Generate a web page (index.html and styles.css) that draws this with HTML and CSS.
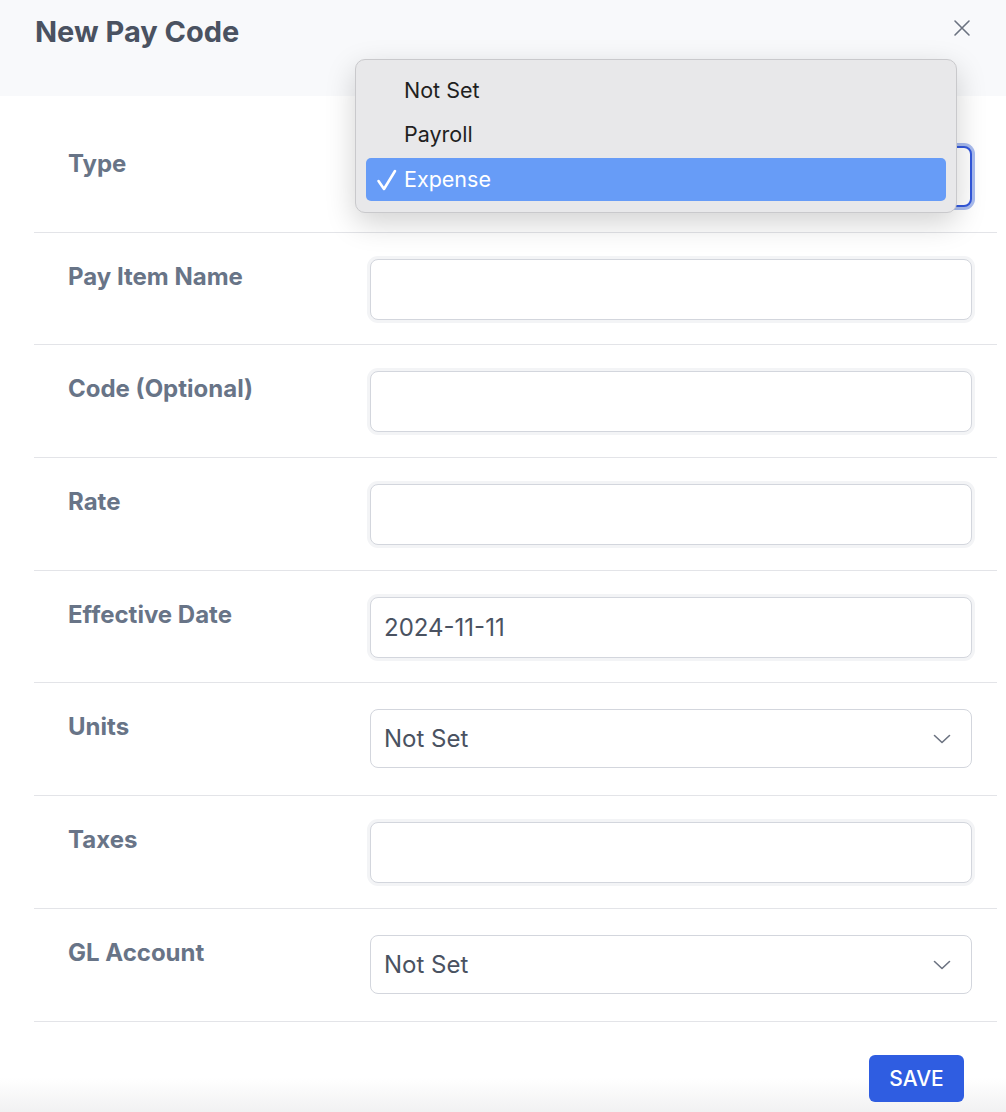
FILE: index.html
```html
<!DOCTYPE html>
<html lang="en">
<head>
    <meta charset="UTF-8">
    <meta name="viewport" content="width=device-width, initial-scale=1.0">
    <title>New Pay Code</title>
    <link rel="stylesheet" href="styles.css">
</head>
<body>
    <div class="modal">
        <header class="modal-header">
            <h2>New Pay Code</h2>
            <button class="close-btn" type="button" aria-label="Close">
                <svg width="18" height="18" viewBox="0 0 18 18"><path d="M2 2 L16 16 M16 2 L2 16" stroke="#6b7280" stroke-width="1.6" fill="none" stroke-linecap="round"/></svg>
            </button>
        </header>

        <form class="modal-body">
            <div class="field-row">
                <label for="type">Type</label>
                <div class="select-wrap">
                    <select id="type" class="select is-focused">
                        <option>Not Set</option>
                        <option>Payroll</option>
                        <option selected>Expense</option>
                    </select>
                </div>
            </div>
            <div class="field-row">
                <label for="payItem">Pay Item Name</label>
                <input id="payItem" class="input" type="text">
            </div>
            <div class="field-row">
                <label for="code">Code (Optional)</label>
                <input id="code" class="input" type="text">
            </div>
            <div class="field-row">
                <label for="rate">Rate</label>
                <input id="rate" class="input" type="text">
            </div>
            <div class="field-row">
                <label for="effDate">Effective Date</label>
                <input id="effDate" class="input" type="text" value="2024-11-11">
            </div>
            <div class="field-row">
                <label for="units">Units</label>
                <div class="select-wrap">
                    <select id="units" class="select">
                        <option>Not Set</option>
                    </select>
                    <svg class="chevron" width="18" height="10" viewBox="0 0 18 10"><path d="M1.5 1.5 L9 8.5 L16.5 1.5" stroke="#6b7280" stroke-width="1.6" fill="none" stroke-linecap="round" stroke-linejoin="round"/></svg>
                </div>
            </div>
            <div class="field-row">
                <label for="taxes">Taxes</label>
                <input id="taxes" class="input" type="text">
            </div>
            <div class="field-row">
                <label for="glAccount">GL Account</label>
                <div class="select-wrap">
                    <select id="glAccount" class="select">
                        <option>Not Set</option>
                    </select>
                    <svg class="chevron" width="18" height="10" viewBox="0 0 18 10"><path d="M1.5 1.5 L9 8.5 L16.5 1.5" stroke="#6b7280" stroke-width="1.6" fill="none" stroke-linecap="round" stroke-linejoin="round"/></svg>
                </div>
            </div>
        </form>

        <footer class="modal-footer">
            <button class="save-btn" type="button">SAVE</button>
        </footer>

        <!-- open native menu of the Type select -->
        <ul class="popup-menu">
            <li class="popup-item">Not Set</li>
            <li class="popup-item">Payroll</li>
            <li class="popup-item is-active">
                <svg class="check" width="22" height="24" viewBox="0 0 22 24"><path d="M2.5 13 L8 21 L19 3" stroke="#fff" stroke-width="2.6" fill="none" stroke-linecap="round" stroke-linejoin="round"/></svg>
                Expense
            </li>
        </ul>
    </div>
</body>
</html>
```

FILE: styles.css
```css
body {
    margin: 0;
    font-family: Inter, Roboto, "Liberation Sans", Arial, sans-serif;
    background-color: #fff;
    color: #4a5261;
}
.modal {
    position: relative;
    width: 1006px;
    min-height: 1112px;
    background: linear-gradient(to bottom, #fff 0, #fff 1078px, #f1f1f2 1112px);
}
.modal-header {
    height: 96px;
    box-sizing: border-box;
    padding: 14px 35px 0 35px;
    background-color: #f8f9fb;
    display: flex;
    justify-content: space-between;
    align-items: flex-start;
}
.modal-header h2 {
    margin: 0;
    font-size: 29px;
    line-height: 35px;
    font-weight: 700;
    color: #4a5261;
}
.close-btn {
    border: none;
    background: none;
    padding: 0;
    margin: 5px 0 0 0;
    width: 18px;
    height: 18px;
    cursor: pointer;
}
.modal-body {
    margin: 0 9px 0 34px;
    padding-top: 24px;
}
.field-row {
    display: flex;
    align-items: flex-start;
    height: 112.7px;
    box-sizing: border-box;
    padding: 26px 25px 0 34px;
    border-bottom: 1px solid #e3e4e8;
}
.field-row label {
    width: 302px;
    flex-shrink: 0;
    padding-top: 1px;
    font-size: 24px;
    line-height: 33px;
    font-weight: 700;
    color: #687487;
}
.input,
.select {
    flex: 1;
    width: 100%;
    height: 61px;
    box-sizing: border-box;
    border: 1px solid #d3d6dd;
    border-radius: 8px;
    padding: 0 13px;
    font-family: Inter, Roboto, "Liberation Sans", Arial, sans-serif;
    font-size: 24px;
    color: #4a5261;
    background-color: #fff;
    box-shadow: 0 0 0 3px #f3f4f6;
    outline: none;
}
.select-wrap {
    position: relative;
    flex: 1;
    display: flex;
}
.select {
    -webkit-appearance: none;
    appearance: none;
    height: 59px;
    box-shadow: none;
}
.select.is-focused {
    height: 61px;
    border: 2px solid #3358dc;
    box-shadow: 0 0 0 3px #a9bcef;
}
.chevron {
    position: absolute;
    right: 21px;
    top: 25px;
}
.modal-footer {
    display: flex;
    justify-content: flex-end;
    padding: 33px 42px 0 0;
}
.save-btn {
    width: 95px;
    height: 47px;
    border: none;
    border-radius: 6px;
    background-color: #2f5de1;
    color: #fff;
    font-family: Inter, Roboto, "Liberation Sans", Arial, sans-serif;
    font-size: 21px;
    font-weight: 500;
    cursor: pointer;
}
.popup-menu {
    position: absolute;
    left: 355px;
    top: 59px;
    width: 602px;
    height: 154px;
    box-sizing: border-box;
    margin: 0;
    padding: 9px 10px 0 10px;
    list-style: none;
    background-color: #e8e8ea;
    border: 1px solid #c9c9cc;
    border-radius: 10px;
    box-shadow: 0 10px 30px rgba(0, 0, 0, 0.18);
    font-family: Inter, "Liberation Sans", Arial, sans-serif;
    font-size: 21.5px;
    color: #1f1f21;
}
.popup-item {
    position: relative;
    height: 44px;
    line-height: 42px;
    padding-left: 38px;
    border-radius: 5px;
}
.popup-item.is-active {
    margin-top: 1px;
    height: 43px;
    background-color: #679cf7;
    color: #fff;
}
.check {
    position: absolute;
    left: 10px;
    top: 10px;
}
```
